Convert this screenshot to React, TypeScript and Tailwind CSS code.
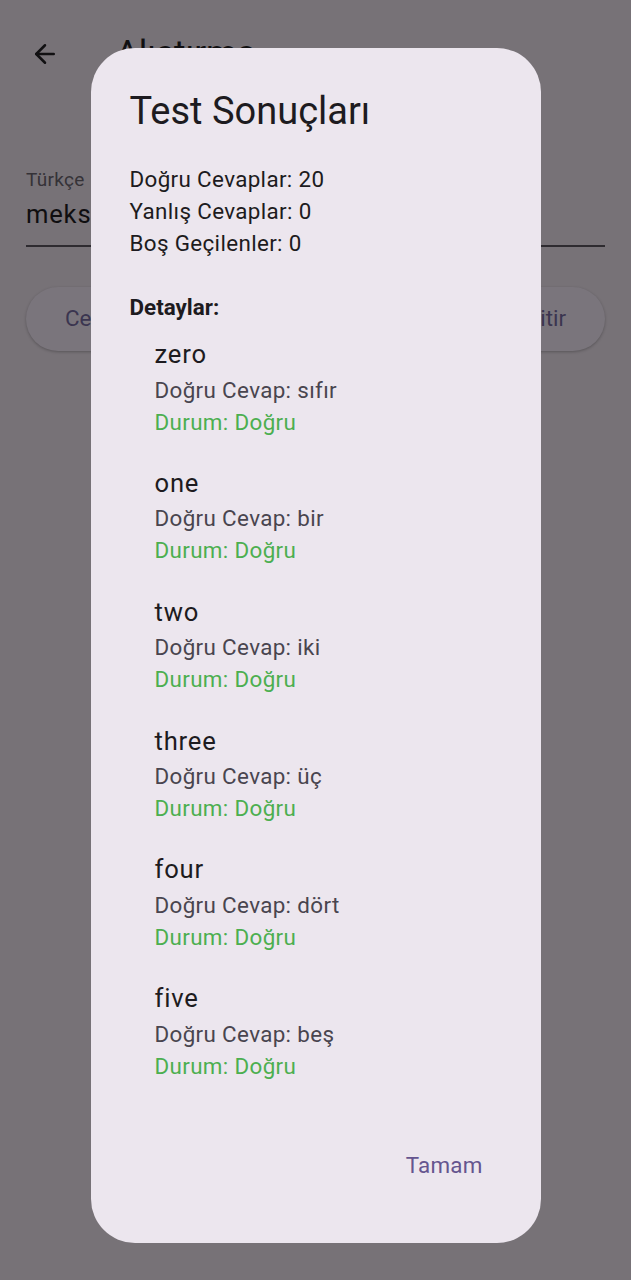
import { ArrowLeft } from "lucide-react";

type Result = {
    word: string;
    answer: string;
};

const results: Result[] = [
    { word: "zero", answer: "sıfır" },
    { word: "one", answer: "bir" },
    { word: "two", answer: "iki" },
    { word: "three", answer: "üç" },
    { word: "four", answer: "dört" },
    { word: "five", answer: "beş" },
];

function ResultTile({ word, answer }: Result) {
    return (
        <li className="px-[25px] py-[13.2px]">
            <p className="text-[25.6px] leading-[38.4px] tracking-[0.8px] text-[#1d1b20]">
                {word}
            </p>
            <p className="text-[22.4px] leading-[32px] tracking-[0.35px] text-[#49454f]">
                Doğru Cevap: {answer}
            </p>
            <p className="text-[22.4px] leading-[32px] tracking-[0.35px] text-[#4caf50]">
                Durum: Doğru
            </p>
        </li>
    );
}

export default function App() {
    return (
        <div
            className="relative h-[1280px] w-full overflow-hidden bg-[#777277]"
            style={{ fontFamily: "Roboto, 'Noto Sans', sans-serif" }}
        >
            {/* page behind the dialog */}
            <div className="flex h-[108px] items-center gap-[56px] px-[30px]">
                <ArrowLeft className="h-[30px] w-[30px] text-[#111012]" strokeWidth={2} />
                <h1 className="text-[35px] leading-[44px] text-[#111012]">Alıştırma</h1>
            </div>
            <div className="px-[26px] pt-[60px]">
                <p className="text-[19px] leading-[24px] tracking-[0.3px] text-[#353237]">Türkçe</p>
                <p className="mt-[3px] text-[25.6px] leading-[38px] tracking-[0.8px] text-[#0f0e10]">
                    meksika
                </p>
                <div className="mt-[12px] h-[2px] bg-[#2e2b30]" />
                <div className="mt-[40px] flex justify-between">
                    <button className="h-[64px] rounded-full bg-[#7a757c] px-[39px] text-[22.4px] text-[#3b3550] shadow-[0_1px_3px_rgba(0,0,0,0.25)]">
                        Cevabı Kontrol Et
                    </button>
                    <button className="h-[64px] rounded-full bg-[#7a757c] px-[39px] text-[22.4px] text-[#3b3550] shadow-[0_1px_3px_rgba(0,0,0,0.25)]">
                        Testi Bitir
                    </button>
                </div>
            </div>

            {/* dialog */}
            <div className="absolute inset-0 flex justify-center pt-[48px]">
                <div className="flex h-[1195px] w-[450px] flex-col rounded-[44px] bg-[#ece6ee]">
                    <div className="px-[39px] pt-[38px]">
                        <h2 className="text-[38px] leading-[51px] text-[#1d1b20]">
                            Test Sonuçları
                        </h2>
                        <div className="mt-[26px] text-[22.4px] leading-[32px] tracking-[0.35px] text-[#1d1b20]">
                            <p>Doğru Cevaplar: 20</p>
                            <p>Yanlış Cevaplar: 0</p>
                            <p>Boş Geçilenler: 0</p>
                            <p className="mt-[32px] font-bold tracking-normal">Detaylar:</p>
                        </div>
                        <ul className="-mt-[1px]">
                            {results.map((r) => (
                                <ResultTile key={r.word} {...r} />
                            ))}
                        </ul>
                    </div>
                    <div className="mt-auto flex justify-end px-[38px] pb-[45px]">
                        <button className="h-[64px] rounded-full px-[20px] text-[22.4px] tracking-[0.2px] text-[#65558f]">
                            Tamam
                        </button>
                    </div>
                </div>
            </div>
        </div>
    );
}
